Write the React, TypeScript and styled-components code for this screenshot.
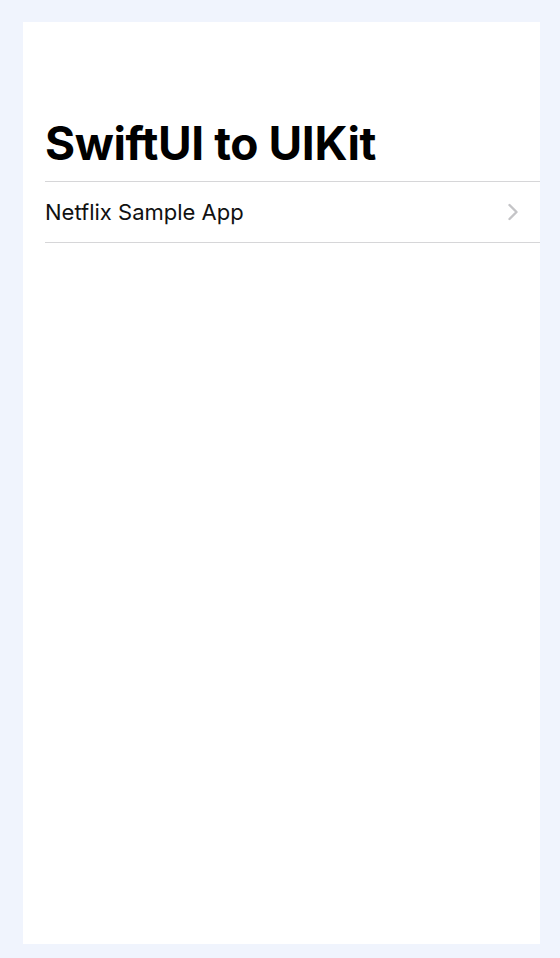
import React from "react";
import styled, { createGlobalStyle } from "styled-components";

const Global = createGlobalStyle`
  html, body { margin: 0; padding: 0; background: #f0f4fd; }
  body { font-family: Inter, "Liberation Sans", sans-serif; }
`;

const Page = styled.div`
  width: 560px;
  height: 958px;
  box-sizing: border-box;
  padding: 22px 20px 14px 23px;
  display: flex;
`;

const Screen = styled.main`
  flex: 1;
  background: #ffffff;
  display: flex;
  flex-direction: column;
  padding-top: 93px;
  padding-left: 22px;
`;

const Title = styled.h1`
  margin: 0 0 10px 0;
  font-size: 46px;
  font-weight: 700;
  letter-spacing: -0.4px;
  line-height: 56px;
  color: #000;
`;

const List = styled.ul`
  list-style: none;
  margin: 0;
  padding: 0;
  border-top: 1px solid #d6d6d8;
`;

const Row = styled.li`
  height: 60px;
  display: flex;
  align-items: center;
  justify-content: space-between;
  padding-right: 21px;
  border-bottom: 1px solid #d6d6d8;
  font-size: 22px;
  color: #111;
  letter-spacing: 0;
`;

const Chevron = () => (
  <svg width="12" height="18" viewBox="0 0 12 18" fill="none">
    <path d="M2.5 2 L9.5 9 L2.5 16" stroke="#c4c4c7" strokeWidth="2.4" strokeLinecap="round" strokeLinejoin="round" />
  </svg>
);

export default function App() {
  return (
    <>
      <Global />
      <Page>
        <Screen>
          <Title>SwiftUI to UIKit</Title>
          <List>
            <Row>
              <span>Netflix Sample App</span>
              <Chevron />
            </Row>
          </List>
        </Screen>
      </Page>
    </>
  );
}
